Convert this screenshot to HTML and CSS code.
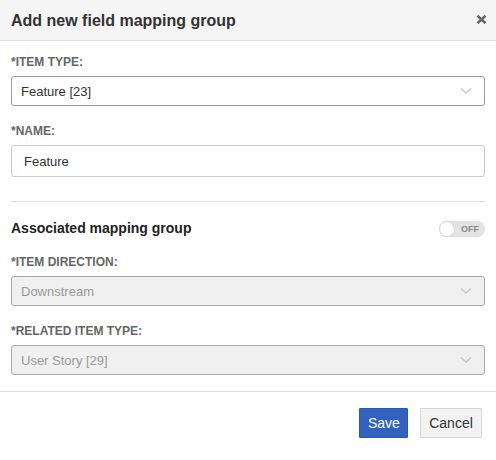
FILE: index.html
```html
<!DOCTYPE html>
<html>
<head>
<meta charset="utf-8">
<link rel="stylesheet" href="styles.css">
</head>
<body>
<div class="dialog">
  <div class="header">
    <div class="title">Add new field mapping group</div>
    <div class="close">
      <svg width="11" height="9" viewBox="0 0 11 9"><path d="M1.5 0.8 L9.5 8.2 M9.5 0.8 L1.5 8.2" stroke="#666" stroke-width="2.6" stroke-linecap="butt"/></svg>
    </div>
  </div>
  <div class="content">
    <div class="label">*ITEM TYPE:</div>
    <div class="select">
      <span>Feature [23]</span>
      <svg class="chev" width="12" height="8" viewBox="0 0 12 8"><path d="M1 1.5 L6 6 L11 1.5" fill="none" stroke="#c8c8c8" stroke-width="1.6"/></svg>
    </div>
    <div class="label gap">*NAME:</div>
    <div class="input">Feature</div>
    <div class="divider"></div>
    <div class="assoc">
      <div class="assoc-title">Associated mapping group</div>
      <div class="toggle"><span class="knob"></span><span class="off">OFF</span></div>
    </div>
    <div class="label">*ITEM DIRECTION:</div>
    <div class="select disabled">
      <span>Downstream</span>
      <svg class="chev" width="12" height="8" viewBox="0 0 12 8"><path d="M1 1.5 L6 6 L11 1.5" fill="none" stroke="#c8c8c8" stroke-width="1.6"/></svg>
    </div>
    <div class="label gap">*RELATED ITEM TYPE:</div>
    <div class="select disabled">
      <span>User Story [29]</span>
      <svg class="chev" width="12" height="8" viewBox="0 0 12 8"><path d="M1 1.5 L6 6 L11 1.5" fill="none" stroke="#c8c8c8" stroke-width="1.6"/></svg>
    </div>
  </div>
  <div class="footer">
    <button class="btn primary">Save</button>
    <button class="btn">Cancel</button>
  </div>
</div>
</body>
</html>
```
FILE: styles.css
```css
html, body {
  margin: 0;
  padding: 0;
  background: #fff;
}
body {
  font-family: "Liberation Sans", Arial, sans-serif;
  color: #333;
}
.dialog {
  width: 496px;
  height: 460px;
  background: #fff;
}
.header {
  box-sizing: border-box;
  background: #f5f5f5;
  border-bottom: 1px solid #e2e2e2;
  display: flex;
  align-items: center;
  justify-content: space-between;
  padding: 2px 9px 0 11px;
  height: 41px;
}
.title {
  font-size: 16px;
  font-weight: bold;
  color: #333;
}
.close {
  display: flex;
  margin-top: -3px;
}
.content {
  padding: 14px 11px 0 11px;
}
.label {
  font-size: 12px;
  font-weight: bold;
  color: #666;
  line-height: 14px;
  margin-bottom: 7px;
}
.label.gap {
  margin-top: 18px;
}
.select {
  height: 30px;
  box-sizing: border-box;
  border: 1px solid #999;
  border-radius: 3px;
  display: flex;
  align-items: center;
  justify-content: space-between;
  padding: 0 12px 0 9px;
  font-size: 13px;
  color: #333;
}
.select.disabled {
  background: #f0f0f0;
  border-color: #aaa;
  color: #999;
}
.input {
  height: 32px;
  box-sizing: border-box;
  border: 1px solid #ccc;
  border-radius: 3px;
  display: flex;
  align-items: center;
  padding: 0 12px;
  font-size: 13px;
  color: #333;
}
.divider {
  height: 1px;
  background: #e0e0e0;
  margin: 24px 0 0 0;
}
.assoc {
  display: flex;
  justify-content: space-between;
  align-items: flex-start;
  height: 16px;
  margin: 19px 0 18px 0;
}
.assoc-title {
  font-size: 14px;
  font-weight: bold;
  line-height: 16px;
  margin-top: -1px;
  color: #222;
}
.toggle {
  width: 46px;
  height: 16px;
  border-radius: 8px;
  background: #e3e3e3;
  position: relative;
  display: flex;
  align-items: center;
  justify-content: flex-end;
  padding-right: 6px;
  box-sizing: border-box;
}
.knob {
  position: absolute;
  left: 0;
  top: 0;
  width: 14px;
  height: 14px;
  border-radius: 50%;
  background: #fff;
  border: 1px solid #d4d4d4;
}
.off {
  font-size: 9px;
  font-weight: bold;
  color: #888;
}
.footer {
  margin-top: 16px;
  border-top: 1px solid #e0e0e0;
  display: flex;
  justify-content: flex-end;
  gap: 12px;
  padding: 16px 14px 0 0;
}
.btn {
  height: 30px;
  box-sizing: border-box;
  font-family: "Liberation Sans", Arial, sans-serif;
  font-size: 14px;
  padding: 0 8px;
  border: 1px solid #d6d6d6;
  background: #f2f2f2;
  color: #333;
  border-radius: 1px;
}
.btn.primary {
  background: #3162c2;
  border-color: #2a56ad;
  color: #fff;
  width: 49px;
}
.btn:not(.primary) {
  width: 62px;
}
```
